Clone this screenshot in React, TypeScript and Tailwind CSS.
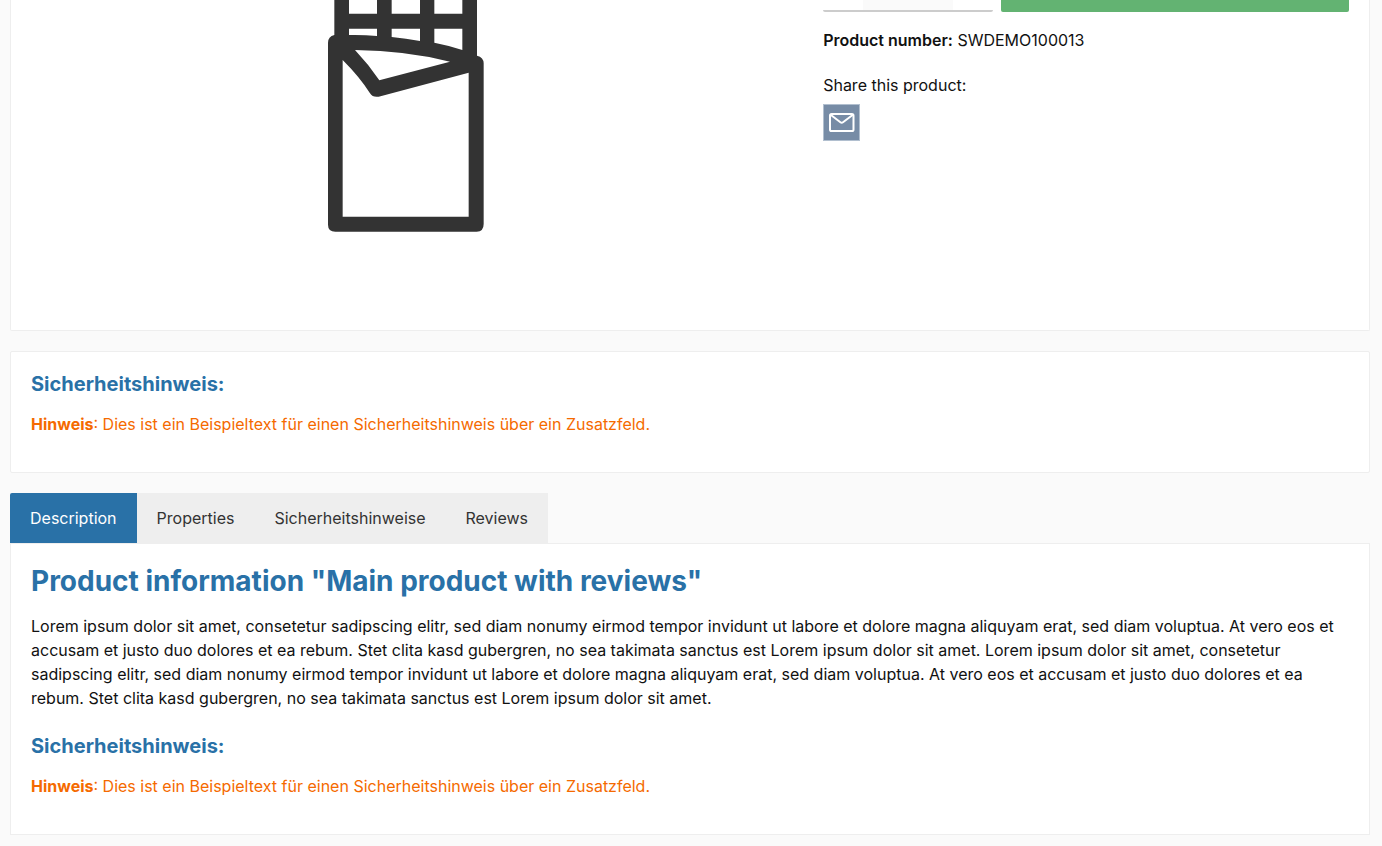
import React, { useState } from 'react';
import clsx from 'clsx';

const TABS = ['Description', 'Properties', 'Sicherheitshinweise', 'Reviews'];

const ChocolateImage = () => (
  <svg viewBox="54 0 474 696" className="w-[158px] h-[232px]" role="img" aria-label="Main product with reviews">
    <path
      fill="#333333"
      fillRule="evenodd"
      d="M73 0V105Q54 110 54 128V674Q54 695 76 695H500Q521 695 521 672V190Q521 172 501 167V0Z
        M117 0H201V41H117Z M245 0H330V41H245Z M373 0H457V41H373Z
        M117 86H201V108Q160 104 117 105Z
        M245 86H330V123Q288 115 245 111Z
        M373 86H457V150Q415 136 373 128Z
        M135 150Q290 152 420 185L208 241Q175 192 135 150Z
        M98 180Q150 232 180 280Q188 293 206 290L476 218V650H98Z"
    />
  </svg>
);

const MailIcon = () => (
  <svg viewBox="0 0 26 20" className="w-[26px] h-5" fill="none" stroke="#ffffff" strokeWidth="2" strokeLinejoin="round" aria-hidden="true">
    <rect x="1" y="1" width="23.5" height="17" rx="1.6" />
    <path d="M1.6 1.8L11.4 9.2Q12.7 10.2 14 9.2L23.9 1.8" />
  </svg>
);

const SafetyNotice = () => (
  <section>
    <h3 className="text-xl leading-6 font-bold text-[#2971a7] mb-4">Sicherheitshinweis:</h3>
    <p className="text-[#f56a00] mb-4">
      <strong className="font-bold">Hinweis</strong>: Dies ist ein Beispieltext für einen Sicherheitshinweis über ein Zusatzfeld.
    </p>
  </section>
);

export default function App() {
  const [activeTab, setActiveTab] = useState('Description');

  return (
    <div className="min-h-screen bg-[#fafafa] pl-2.5 pr-3 pb-2.5 font-['Inter',sans-serif] text-base leading-6 text-[#111111]">
      {/* Product */}
      <div className="flex bg-white border border-t-0 border-[#eeeeee] rounded-b-xs">
        <div className="w-7/12 px-5 pb-[98px] flex justify-center">
          <ChocolateImage />
        </div>
        <div className="w-5/12 px-5">
          <form className="grid grid-cols-3 gap-2" onSubmit={(e) => e.preventDefault()}>
            <div className="flex h-3 border-b-2 border-[#cccccc] rounded-b-xs">
              <button type="button" aria-label="Decrease quantity" className="w-10 bg-white" />
              <input type="text" aria-label="Quantity" className="min-w-0 flex-1 bg-[#fafafa] outline-none" />
              <button type="button" aria-label="Increase quantity" className="w-10 bg-white" />
            </div>
            <button type="submit" aria-label="Add to shopping cart" className="col-span-2 h-3 bg-[#63b372] rounded-b-xs" />
          </form>
          <p className="mt-4">
            <strong className="font-semibold">Product number:</strong> SWDEMO100013
          </p>
          <p className="mt-[21px] mb-[7px]">Share this product:</p>
          <a href="#share" aria-label="Share by e-mail" className="flex items-center justify-center size-[37px] bg-[#778ca6] border border-[#b1bfcf]">
            <MailIcon />
          </a>
        </div>
      </div>

      {/* Safety notice */}
      <div className="mt-5 p-5 bg-white border border-[#eeeeee] rounded-xs">
        <SafetyNotice />
      </div>

      {/* Tabs */}
      <div className="mt-5">
        <div role="tablist" className="flex">
          {TABS.map((tab) => (
            <button
              key={tab}
              type="button"
              role="tab"
              aria-selected={tab === activeTab}
              onClick={() => setActiveTab(tab)}
              className={clsx(
                'h-[50px] px-5 first:rounded-tl-xs',
                tab === activeTab ? 'bg-[#2971a7] text-white' : 'bg-[#eeeeee] text-[#333333]'
              )}
            >
              {tab}
            </button>
          ))}
        </div>
        <div role="tabpanel" className="p-5 bg-white border border-[#eeeeee]">
          <h2 className="text-[28px] leading-[34px] font-bold text-[#2971a7] mb-4">
            Product information "Main product with reviews"
          </h2>
          <p className="mb-6">
            Lorem ipsum dolor sit amet, consetetur sadipscing elitr, sed diam nonumy eirmod tempor invidunt ut labore et dolore
            magna aliquyam erat, sed diam voluptua. At vero eos et accusam et justo duo dolores et ea rebum. Stet clita kasd
            gubergren, no sea takimata sanctus est Lorem ipsum dolor sit amet. Lorem ipsum dolor sit amet, consetetur sadipscing
            elitr, sed diam nonumy eirmod tempor invidunt ut labore et dolore magna aliquyam erat, sed diam voluptua. At vero eos
            et accusam et justo duo dolores et ea rebum. Stet clita kasd gubergren, no sea takimata sanctus est Lorem ipsum dolor
            sit amet.
          </p>
          <SafetyNotice />
        </div>
      </div>
    </div>
  );
}
